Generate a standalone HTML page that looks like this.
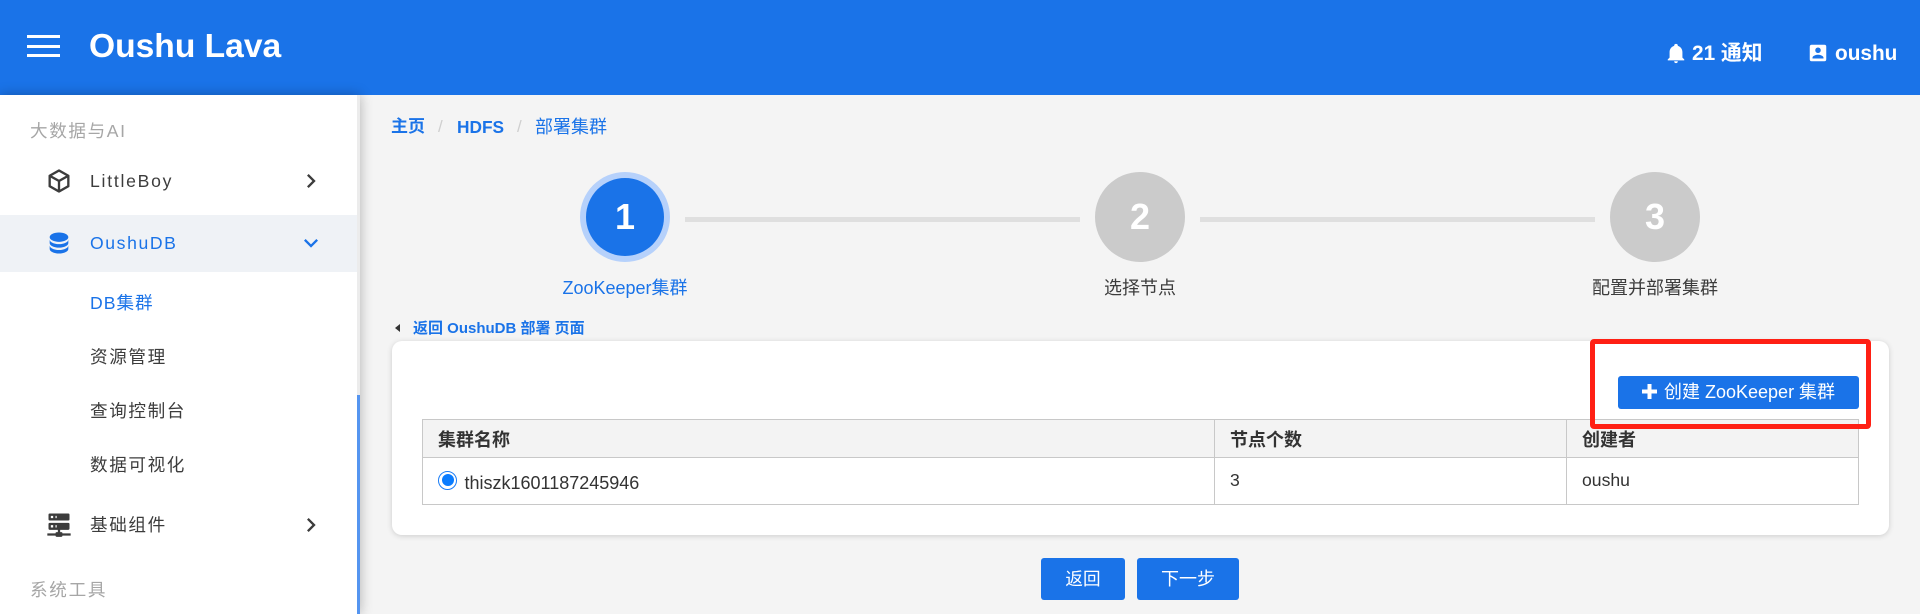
<!DOCTYPE html>
<html lang="zh">
<head>
<meta charset="utf-8">
<title>Oushu Lava</title>
<style>
html,body{margin:0;padding:0;width:1920px;height:614px;overflow:hidden;background:#f4f4f4;font-family:"Liberation Sans","Noto Sans CJK SC",sans-serif}
.a{position:absolute}
.t{position:absolute;white-space:nowrap;line-height:24px;height:24px}
.blue{color:#1a73e8}
.nav{font-size:17.6px;letter-spacing:1.6px;color:#3c3c3c}
.grp{font-size:17.6px;letter-spacing:1.6px;color:#a6a6a6}
.line{position:absolute;background:#dfdfdf;height:5px;top:217px}
.c{position:absolute;top:172px;width:90px;height:90px;border-radius:50%;background:#cbcbcb;color:#fff;font-weight:bold;font-size:36px;line-height:90px;text-align:center}
.lab{position:absolute;top:276px;width:300px;text-align:center;font-size:18px;line-height:24px;color:#3c3c3c}
.btn{position:absolute;background:#1a73e8;color:#fff;border-radius:3px;text-align:center;font-size:18px}
.bd{position:absolute;background:#c8c8c8}
.th{font-size:18px;font-weight:bold;color:#333}
.td{font-size:17.6px;color:#333}
svg{position:absolute;display:block}
</style>
</head>
<body>
<!-- header -->
<div class="a" style="left:0;top:0;width:1920px;height:95px;background:#1a73e8"></div>
<div class="a" style="left:27px;top:35px;width:33px;height:3px;background:#fff"></div>
<div class="a" style="left:27px;top:45px;width:33px;height:3px;background:#fff"></div>
<div class="a" style="left:27px;top:54px;width:33px;height:3px;background:#fff"></div>
<div class="t" style="left:89px;top:35px;font-size:33.6px;line-height:24px;font-weight:bold;color:#fff">Oushu Lava</div>

<svg style="left:1665px;top:42px" width="22" height="22" viewBox="0 0 24 24" fill="#fff"><path d="M21,19V20H3V19L5,17V11C5,7.9 7.03,5.17 10,4.29C10,4.19 10,4.1 10,4A2,2 0 0,1 12,2A2,2 0 0,1 14,4C14,4.1 14,4.19 14,4.29C16.97,5.17 19,7.9 19,11V17L21,19M14,21A2,2 0 0,1 12,23A2,2 0 0,1 10,21"/></svg>
<div class="t" style="left:1692px;top:42px;font-size:20.8px;font-weight:bold;color:#fff">21 通知</div>
<svg style="left:1807px;top:42px" width="22" height="22" viewBox="0 0 24 24" fill="#fff"><path d="M6,17C6,15 10,13.9 12,13.9C14,13.9 18,15 18,17V18H6M15,9A3,3 0 0,1 12,12A3,3 0 0,1 9,9A3,3 0 0,1 12,6A3,3 0 0,1 15,9M3,5V19A2,2 0 0,0 5,21H19A2,2 0 0,0 21,19V5A2,2 0 0,0 19,3H5C3.89,3 3,3.9 3,5Z"/></svg>
<div class="t" style="left:1835px;top:42px;font-size:20.8px;font-weight:bold;color:#fff">oushu</div>

<!-- sidebar -->
<div class="a" style="left:0;top:95px;width:360px;height:519px;background:#fff;box-shadow:0 0 12px rgba(0,0,0,.28)"></div>
<div class="a" style="left:357px;top:95px;width:3px;height:519px;background:#ececec"></div>
<div class="a" style="left:357px;top:395px;width:3px;height:219px;background:#5595f0"></div>
<div class="a" style="left:0;top:215px;width:357px;height:57px;background:#eff2f6"></div>

<div class="t grp" style="left:30px;top:119px">大数据与AI</div>
<svg style="left:45px;top:167px" width="28" height="28" viewBox="0 0 24 24" fill="#3c3c3c"><path d="M21,16.5C21,16.88 20.79,17.21 20.47,17.38L12.57,21.82C12.41,21.94 12.21,22 12,22C11.79,22 11.59,21.94 11.43,21.82L3.53,17.38C3.21,17.21 3,16.88 3,16.5V7.5C3,7.12 3.21,6.79 3.53,6.62L11.43,2.18C11.59,2.06 11.79,2 12,2C12.21,2 12.41,2.06 12.57,2.18L20.47,6.62C20.79,6.79 21,7.12 21,7.5V16.5M12,4.15L6.04,7.5L12,10.85L17.96,7.5L12,4.15M5,15.91L11,19.29V12.58L5,9.21V15.91M19,15.91V9.21L13,12.58V19.29L19,15.91Z"/></svg>
<div class="t nav" style="left:90px;top:169px;letter-spacing:1.75px">LittleBoy</div>
<svg style="left:297px;top:167px" width="28" height="28" viewBox="0 0 24 24" fill="#3c3c3c"><path d="M8.59,16.58L13.17,12L8.59,7.41L10,6L16,12L10,18L8.59,16.58Z"/></svg>

<svg style="left:45px;top:229px" width="28" height="28" viewBox="0 0 24 24" fill="#1a73e8"><path d="M12,3C7.58,3 4,4.79 4,7C4,9.21 7.58,11 12,11C16.42,11 20,9.21 20,7C20,4.79 16.42,3 12,3M4,9V12C4,14.21 7.58,16 12,16C16.42,16 20,14.21 20,12V9C20,11.21 16.42,13 12,13C7.58,13 4,11.21 4,9M4,14V17C4,19.21 7.58,21 12,21C16.42,21 20,19.21 20,17V14C20,16.21 16.42,18 12,18C7.58,18 4,16.21 4,14Z"/></svg>
<div class="t nav blue" style="left:90px;top:231px;color:#1a73e8">OushuDB</div>
<svg style="left:297px;top:229px" width="28" height="28" viewBox="0 0 24 24" fill="#1a73e8"><path d="M7.41,8.58L12,13.17L16.59,8.58L18,10L12,16L6,10L7.41,8.58Z"/></svg>

<div class="t nav" style="left:90px;top:291px;color:#1a73e8;letter-spacing:1px">DB集群</div>
<div class="t nav" style="left:90px;top:345px">资源管理</div>
<div class="t nav" style="left:90px;top:399px">查询控制台</div>
<div class="t nav" style="left:90px;top:453px">数据可视化</div>

<svg style="left:45px;top:510px" width="28" height="28" viewBox="0 0 24 24" fill="#3c3c3c"><path d="M13,19H14A1,1 0 0,1 15,20H22V22H15A1,1 0 0,1 14,23H10A1,1 0 0,1 9,22H2V20H9A1,1 0 0,1 10,19H11V17H4A1,1 0 0,1 3,16V12A1,1 0 0,1 4,11H20A1,1 0 0,1 21,12V16A1,1 0 0,1 20,17H13V19M4,3H20A1,1 0 0,1 21,4V8A1,1 0 0,1 20,9H4A1,1 0 0,1 3,8V4A1,1 0 0,1 4,3M9,7H10V5H9V7M9,15H10V13H9V15M5,5V7H7V5H5M5,13V15H7V13H5Z"/></svg>
<div class="t nav" style="left:90px;top:513px">基础组件</div>
<svg style="left:297px;top:511px" width="28" height="28" viewBox="0 0 24 24" fill="#3c3c3c"><path d="M8.59,16.58L13.17,12L8.59,7.41L10,6L16,12L10,18L8.59,16.58Z"/></svg>
<div class="t grp" style="left:30px;top:578px;letter-spacing:1.7px">系统工具</div>

<!-- breadcrumb -->
<div class="t" style="left:391px;top:115px;font-size:17px;font-weight:bold;color:#1a73e8">主页</div>
<div class="t" style="left:438px;top:115px;font-size:17px;color:#cfcfcf">/</div>
<div class="t" style="left:457px;top:115px;font-size:17.3px;font-weight:bold;color:#1a73e8">HDFS</div>
<div class="t" style="left:517px;top:115px;font-size:17px;color:#cfcfcf">/</div>
<div class="t" style="left:535px;top:115px;font-size:18px;color:#1a73e8">部署集群</div>

<!-- stepper -->
<div class="line" style="left:685px;width:395px"></div>
<div class="line" style="left:1200px;width:395px"></div>
<div class="a" style="left:580px;top:172px;width:90px;height:90px;border-radius:50%;background:#b6d1fb"></div>
<div class="a" style="left:586px;top:178px;width:78px;height:78px;border-radius:50%;background:#1a73e8;color:#fff;font-weight:bold;font-size:36px;line-height:78px;text-align:center">1</div>
<div class="c" style="left:1095px">2</div>
<div class="c" style="left:1610px">3</div>
<div class="lab" style="left:475px;color:#1a73e8">ZooKeeper集群</div>
<div class="lab" style="left:990px">选择节点</div>
<div class="lab" style="left:1505px">配置并部署集群</div>

<!-- back link -->
<div class="a" style="left:395px;top:324px;width:0;height:0;border-top:4.5px solid transparent;border-bottom:4.5px solid transparent;border-right:5px solid #333"></div>
<div class="t" style="left:413px;top:317px;font-size:15px;font-weight:bold;color:#1a73e8">返回 OushuDB 部署 页面</div>

<!-- card -->
<div class="a" style="left:392px;top:341px;width:1497px;height:194px;background:#fff;border-radius:10px;box-shadow:0 1px 6px rgba(0,0,0,.16)"></div>
<div class="a" style="left:422px;top:419px;width:1437px;height:38px;background:#f3f3f3"></div>
<div class="bd" style="left:422px;top:419px;width:1437px;height:1px"></div>
<div class="bd" style="left:422px;top:457px;width:1437px;height:1px"></div>
<div class="bd" style="left:422px;top:504px;width:1437px;height:1px"></div>
<div class="bd" style="left:422px;top:419px;width:1px;height:86px"></div>
<div class="bd" style="left:1214px;top:419px;width:1px;height:86px"></div>
<div class="bd" style="left:1566px;top:419px;width:1px;height:86px"></div>
<div class="bd" style="left:1858px;top:419px;width:1px;height:86px"></div>

<div class="t th" style="left:438px;top:428px">集群名称</div>
<div class="t th" style="left:1230px;top:428px">节点个数</div>
<div class="t th" style="left:1582px;top:428px">创建者</div>

<div class="a" style="left:438px;top:471px;width:17px;height:17px;border:1px solid #1a7cf5;border-radius:50%;background:#fff"></div>
<div class="a" style="left:441.5px;top:474px;width:12px;height:12px;border-radius:50%;background:#0a7cff"></div>
<div class="t td" style="left:464.5px;top:471px;font-size:18px">thiszk1601187245946</div>
<div class="t td" style="left:1230px;top:468px">3</div>
<div class="t td" style="left:1582px;top:468px">oushu</div>

<!-- create button -->
<div class="btn" style="left:1618px;top:376px;width:241px;height:33px"></div>
<svg style="left:1642px;top:384px" width="15" height="15" viewBox="0 0 15 15"><path d="M7.5 0V15M0 7.5H15" stroke="#fff" stroke-width="4" fill="none"/></svg>
<div class="t" style="left:1664px;top:380px;font-size:18px;color:#fff">创建 ZooKeeper 集群</div>

<!-- red annotation -->
<div class="a" style="left:1590px;top:339px;width:271px;height:80px;border:5px solid #ff2014;border-radius:4px"></div>

<!-- bottom buttons -->
<div class="btn" style="left:1041px;top:558px;width:84px;height:42px;line-height:42px;font-size:17.6px">返回</div>
<div class="btn" style="left:1137px;top:558px;width:102px;height:42px;line-height:42px;font-size:18px">下一步</div>
</body>
</html>
